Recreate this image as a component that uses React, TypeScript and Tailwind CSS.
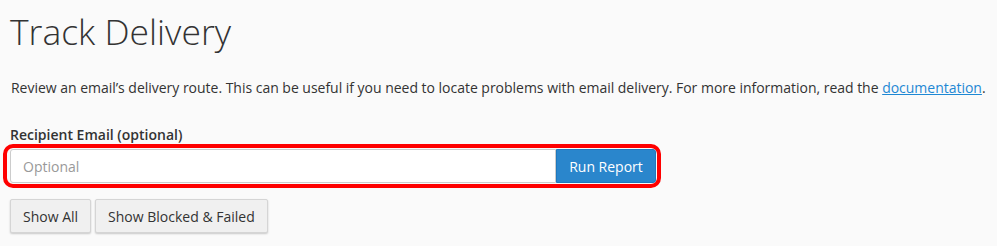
import React from 'react';

const App: React.FC = () => {
  return (
    <div className="min-h-screen bg-[#fafafa] px-[10px] text-[#333] font-['Open_Sans',sans-serif]">
      {/* Heading */}
      <h1 className="pt-[11px] text-[35.5px] leading-[40px] font-light text-[#333]">Track Delivery</h1>

      {/* Description */}
      <p className="mt-[27px] -mr-[10px] whitespace-nowrap text-[14px] leading-[20px] pl-[1px] tracking-[-0.02px]">
        Review an email’s delivery route. This can be useful if you need to locate problems with email delivery. For
        more information, read the{' '}
        <a href="#" className="text-[#1e88d4] underline">
          documentation
        </a>
        .
      </p>

      {/* Form */}
      <label className="block mt-[27px] text-[14px] leading-[20px] font-semibold">Recipient Email (optional)</label>

      <div className="-ml-[7px] -mt-[1px] w-fit rounded-[10px] border-[4px] border-[#ff0000] pl-[3px] pr-[1px] py-[1px]">
        <div className="flex">
          <input
            type="text"
            placeholder="Optional"
            className="h-[34px] w-[546px] rounded-l-[3px] border border-[#ccc] bg-white px-[12px] text-[14px] placeholder:text-[#999] outline-none"
          />
          <button className="h-[34px] w-[100px] rounded-r-[3px] border border-[#1f78bd] bg-[#2a86cc] text-[14px] text-white">
            Run Report
          </button>
        </div>
      </div>

      <div className="mt-[11px] flex gap-[4px]">
        <button className="h-[34px] rounded-[2px] border border-[#d5d5d5] bg-[#f0f0f0] px-[12px] text-[14px] text-[#333] shadow-[0_1px_2px_rgba(0,0,0,0.2)]">
          Show All
        </button>
        <button className="h-[34px] rounded-[2px] border border-[#d5d5d5] bg-[#f0f0f0] px-[12px] text-[14px] text-[#333] shadow-[0_1px_2px_rgba(0,0,0,0.2)]">
          Show Blocked &amp; Failed
        </button>
      </div>
    </div>
  );
};

export default App;
